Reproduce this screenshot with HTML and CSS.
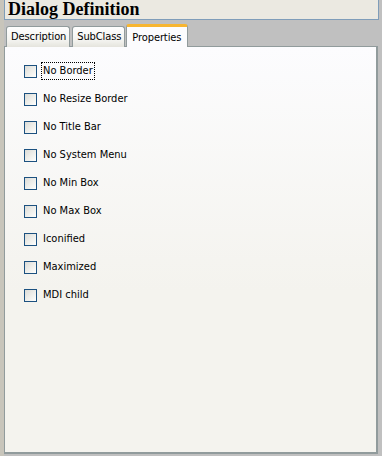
FILE: index.html
```html
<!DOCTYPE html>
<html lang="en">
<head>
    <meta charset="UTF-8">
    <title>Dialog Definition</title>
    <link rel="stylesheet" href="styles.css">
</head>
<body>
    <div class="window">
        <div class="title-bar">Dialog Definition</div>

        <div class="tabs">
            <div class="tab">Description</div>
            <div class="tab">SubClass</div>
            <div class="tab active">Properties</div>
        </div>

        <div class="panel">
            <label class="option"><span class="box"></span><span class="text focused">No Border</span></label>
            <label class="option"><span class="box"></span><span class="text">No Resize Border</span></label>
            <label class="option"><span class="box"></span><span class="text">No Title Bar</span></label>
            <label class="option"><span class="box"></span><span class="text">No System Menu</span></label>
            <label class="option"><span class="box"></span><span class="text">No Min Box</span></label>
            <label class="option"><span class="box"></span><span class="text">No Max Box</span></label>
            <label class="option"><span class="box"></span><span class="text">Iconified</span></label>
            <label class="option"><span class="box"></span><span class="text">Maximized</span></label>
            <label class="option"><span class="box"></span><span class="text">MDI child</span></label>
        </div>
    </div>
</body>
</html>
```

FILE: styles.css
```css
body {
    margin: 0;
    background: #c0c0c0;
    font-family: "DejaVu Sans Condensed", "DejaVu Sans", sans-serif;
    font-stretch: condensed;
    font-size: 11px;
    color: #000;
}

.window {
    width: 382px;
    height: 456px;
    box-sizing: border-box;
    display: flex;
    flex-direction: column;
    padding: 0 4px 2px 0;
    background: #c0c0c0;
    border-left: 4px solid #c8c5bb;
}

.title-bar {
    height: 20px;
    box-sizing: border-box;
    background: #ebe9e1;
    border: 1px solid #7f9db9;
    border-top: none;
    font-family: "Liberation Serif", "Times New Roman", serif;
    font-stretch: normal;
    font-weight: bold;
    font-size: 18px;
    line-height: 18px;
    padding-left: 3px;
    margin-right: -1px;
}

.tabs {
    display: flex;
    align-items: flex-end;
    gap: 2px;
    height: 27px;
    padding-left: 2px;
    margin-bottom: -1px;
    position: relative;
    z-index: 1;
}

.tab {
    height: 21px;
    box-sizing: border-box;
    padding: 3px 3px 0 4px;
    background: linear-gradient(#fefefe, #f2f2ee 70%, #e5e4dd);
    border: 1px solid #919b9c;
    border-bottom: none;
    border-radius: 3px 3px 0 0;
    letter-spacing: -0.1px;
}

.tab.active {
    height: 23px;
    padding-top: 4px;
    padding-left: 5px;
    padding-right: 6px;
    background: #fcfcfe;
    border-top: 3px solid #f7b530;
    margin-left: -1px;
}

.panel {
    flex: 1;
    display: flex;
    flex-direction: column;
    gap: 14px;
    padding: 17px 0 0 19px;
    border: 1px solid #919b9c;
    border-right-width: 2px;
    border-bottom-width: 2px;
    background: linear-gradient(#fcfcfe, #f4f3ee 60%);
}

.option {
    display: flex;
    align-items: center;
    gap: 4px;
    height: 14px;
}

.box {
    width: 11px;
    height: 11px;
    border: 1px solid #1c5180;
    background: linear-gradient(135deg, #dcdcd7, #f8f8f5 80%, #fff);
}

.text {
    padding: 1px 1px 2px 1px;
    border: 1px dotted transparent;
}

.text.focused {
    border-color: #000;
}
```
